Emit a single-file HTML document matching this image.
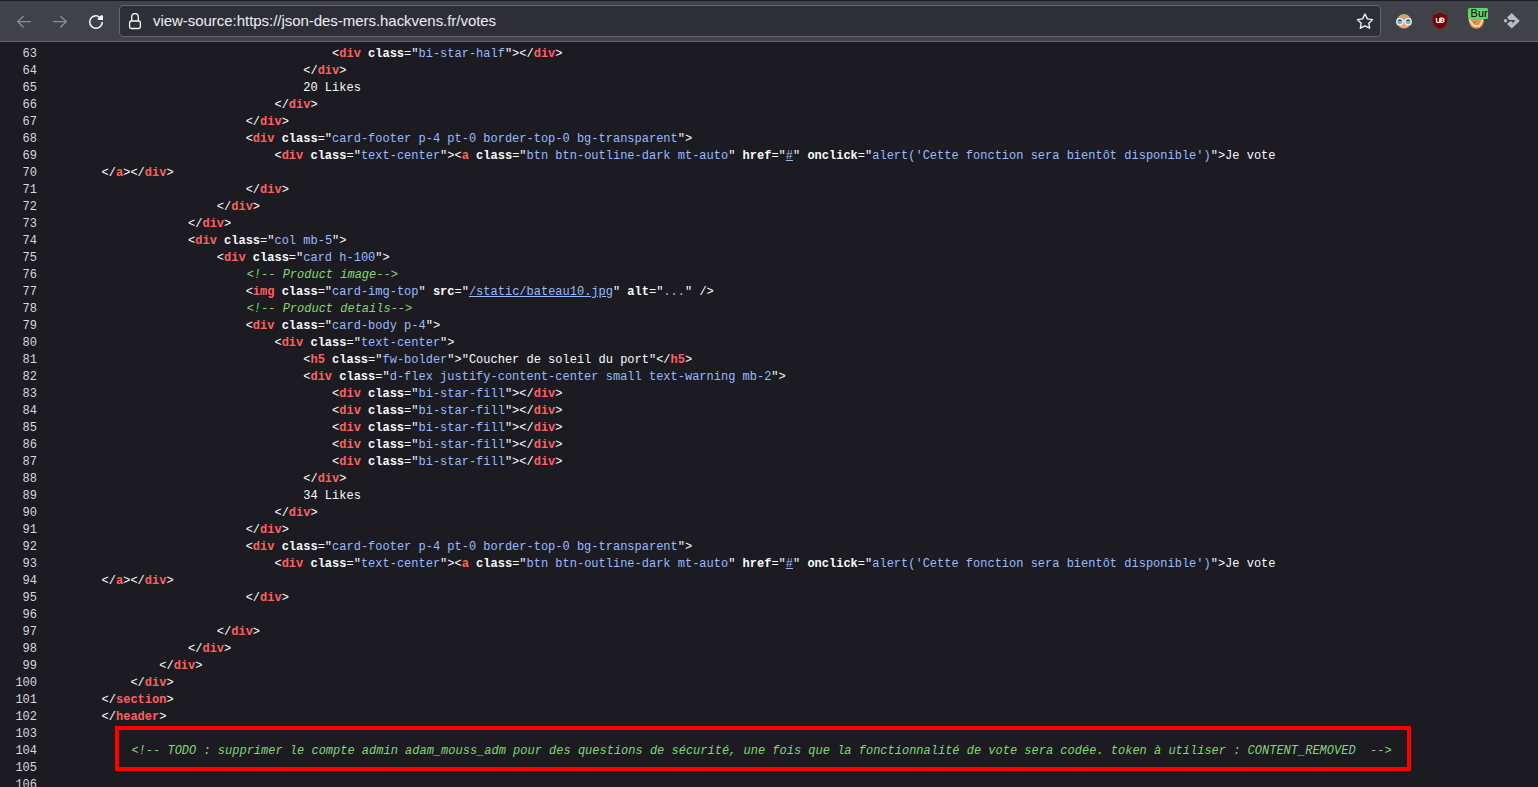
<!DOCTYPE html>
<html><head><meta charset="utf-8">
<style>
html,body{margin:0;padding:0;}
body{width:1538px;height:787px;overflow:hidden;background:#1c1b22;position:relative;font-family:"Liberation Sans",sans-serif;}
#top{position:absolute;left:0;top:0;width:1538px;height:1px;background:#1c1b22;}
#bar{position:absolute;left:0;top:1px;width:1538px;height:40px;background:#41414a;}
#barline{position:absolute;left:0;top:41px;width:1538px;height:1px;background:#66666c;}
#url{position:absolute;left:119px;top:5px;width:1260px;height:30px;border:1px solid #65656c;border-radius:4px;background:#2e2e37;}
#urltext{position:absolute;left:153px;top:11px;font-size:15px;letter-spacing:-0.04px;color:#ededf1;white-space:pre;line-height:20px;}
.ic{position:absolute;}
#code{position:absolute;left:44px;top:46px;margin:0;font-family:"Liberation Mono",monospace;font-size:12px;line-height:17px;color:#fbfbfe;white-space:pre;}
#nums{position:absolute;left:0;width:37px;top:46px;margin:0;font-family:"Liberation Mono",monospace;font-size:12px;line-height:17px;color:#d8d8de;white-space:pre;text-align:right;}
.t{color:#ff6060;font-weight:bold;}
.a{font-weight:bold;color:#fbfbfe;}
.v{color:#97bbff;}
.v u{text-decoration:underline;}
.c{color:#86d672;font-style:italic;position:relative;left:1px;}
#box{position:absolute;left:115px;top:726px;width:1288px;height:37px;border:4px solid #ff0000;}
</style></head><body>
<div id="top"></div>
<div id="bar"></div>
<div id="barline"></div>
<div id="url"></div>
<div id="urltext">view-source:https://json-des-mers.hackvens.fr/votes</div>
<svg class="ic" style="left:0;top:0" width="1538" height="42" viewBox="0 0 1538 42">
 <g fill="none" stroke="#8d8d95" stroke-width="1.4" stroke-linecap="round" stroke-linejoin="round">
  <path d="M23.2 16.5 L17.6 21.6 L23.2 26.9 M17.7 21.6 H30.6"/>
  <path d="M60.8 16.5 L66.4 21.6 L60.8 26.9 M66.3 21.6 H53.4"/>
 </g>
 <svg x="88" y="14" width="16" height="16" viewBox="0 0 16 16"><path fill="#fbfbfe" d="M10.707 6h3.993l.3-.3V1.707L13.293 1 11.9 2.393A6.971 6.971 0 0 0 8 1a7 7 0 1 0 7 7h-1.5A5.5 5.5 0 1 1 8 2.5a5.454 5.454 0 0 1 2.8.8L9.3 4.8 10.707 6z"/></svg>
 <g fill="none" stroke="#fbfbfe" stroke-width="1.3">
  <rect x="129.6" y="21" width="10.8" height="7.5" rx="1.8"/>
  <path d="M131.7 21 V17 A3.3 3.3 0 0 1 138.3 17 V21"/>
 </g>
 <path d="M1365 14 L1367.4 18.9 L1372.6 19.6 L1368.8 23.3 L1369.7 28.2 L1365 25.9 L1360.3 28.2 L1361.2 23.3 L1357.4 19.6 L1362.6 18.9 Z" fill="none" stroke="#fbfbfe" stroke-width="1.3" stroke-linejoin="round"/>
 <!-- face ext -->
 <g>
  <path d="M1396.6 21.5 A7.4 7.6 0 0 1 1411.4 21.5 L1411 26 Q1404 17 1397 26 Z" fill="#c8a476"/>
  <path d="M1398 23 Q1404 15.5 1410 23 Q1410 28.4 1404 28.4 Q1398 28.4 1398 23 Z" fill="#e9a57a"/>
  <circle cx="1399.8" cy="21.8" r="3.1" fill="#6fb8c8" stroke="#f2f2f2" stroke-width="1.2"/>
  <circle cx="1408.2" cy="21.8" r="3.1" fill="#6fb8c8" stroke="#f2f2f2" stroke-width="1.2"/>
  <path d="M1397.8 21 A2.1 2.1 0 0 1 1401.8 21 Z" fill="#1d4a5a"/>
  <path d="M1406.2 21 A2.1 2.1 0 0 1 1410.2 21 Z" fill="#1d4a5a"/>
  <path d="M1402.8 21.2 H1405.2" stroke="#f2f2f2" stroke-width="1.2"/>
 </g>
 <!-- ublock -->
 <path d="M1440 12.8 L1447.2 15.6 L1447.2 21 Q1446.7 26 1440 29 Q1433.3 26 1432.8 21 L1432.8 15.6 Z" fill="#800000"/>
 <path d="M1436.5 18 V21 Q1436.5 22.6 1438.2 22.6 Q1439.8 22.6 1439.8 21 V18" fill="none" stroke="#fff" stroke-width="1.3"/>
 <path d="M1440.8 18.1 H1441.8 A2.2 2.2 0 0 1 1441.8 22.5 H1440.8 Z" fill="none" stroke="#fff" stroke-width="1.2"/>
 <path d="M1441.2 19.2 L1443 20.3 L1441.2 21.4 Z" fill="#fff"/>
 <!-- burp -->
 <circle cx="1476.4" cy="21.3" r="7.4" fill="#ee9230"/>
 <path d="M1469 19.2 L1473.6 25.6 L1479.6 26 L1482.8 19.6" fill="none" stroke="#e4e4e4" stroke-width="1.6" stroke-linejoin="round"/>
 <path d="M1473 22.6 Q1474.6 21.6 1476.4 22.6 Q1474.6 23.4 1473 22.6 Z" fill="#707070"/>
 <rect x="1468" y="7.9" width="20" height="11" rx="1.5" fill="#62d36a"/>
 <text x="1470.6" y="17" font-family="Liberation Sans" font-size="11.8" fill="#000" textLength="17" lengthAdjust="spacingAndGlyphs">Bur</text>
 <!-- diamond -->
 <path d="M1511.7 13.1 L1519.8 20.9 L1511.7 28.4 L1507 24.1 L1510.2 20.9 L1507 17.6 Z" fill="#bababd"/>
 <path d="M1507.5 20.7 H1514.3" stroke="#41414a" stroke-width="1.4"/>
 <path d="M1511.6 20.1 L1515.2 20.1 L1512.8 23.4 Z" fill="#41414a"/>
 <circle cx="1505.5" cy="20.8" r="1.7" fill="#bababd"/>
</svg>

<pre id="nums">63
64
65
66
67
68
69
70
71
72
73
74
75
76
77
78
79
80
81
82
83
84
85
86
87
88
89
90
91
92
93
94
95
96
97
98
99
100
101
102
103
104
105
106</pre>
<pre id="code">                                        &lt;<b class="t">div</b> <b class="a">class</b>="<span class="v">bi-star-half</span>"&gt;&lt;/<b class="t">div</b>&gt;
                                    &lt;/<b class="t">div</b>&gt;
                                    20 Likes
                                &lt;/<b class="t">div</b>&gt;
                            &lt;/<b class="t">div</b>&gt;
                            &lt;<b class="t">div</b> <b class="a">class</b>="<span class="v">card-footer p-4 pt-0 border-top-0 bg-transparent</span>"&gt;
                                &lt;<b class="t">div</b> <b class="a">class</b>="<span class="v">text-center</span>"&gt;&lt;<b class="t">a</b> <b class="a">class</b>="<span class="v">btn btn-outline-dark mt-auto</span>" <b class="a">href</b>="<span class="v"><u>#</u></span>" <b class="a">onclick</b>="<span class="v">alert('Cette fonction sera bientôt disponible')</span>"&gt;Je vote
        &lt;/<b class="t">a</b>&gt;&lt;/<b class="t">div</b>&gt;
                            &lt;/<b class="t">div</b>&gt;
                        &lt;/<b class="t">div</b>&gt;
                    &lt;/<b class="t">div</b>&gt;
                    &lt;<b class="t">div</b> <b class="a">class</b>="<span class="v">col mb-5</span>"&gt;
                        &lt;<b class="t">div</b> <b class="a">class</b>="<span class="v">card h-100</span>"&gt;
                            <i class="c">&lt;!-- Product image--&gt;</i>
                            &lt;<b class="t">img</b> <b class="a">class</b>="<span class="v">card-img-top</span>" <b class="a">src</b>="<span class="v"><u>/static/bateau10.jpg</u></span>" <b class="a">alt</b>="<span class="v">...</span>" /&gt;
                            <i class="c">&lt;!-- Product details--&gt;</i>
                            &lt;<b class="t">div</b> <b class="a">class</b>="<span class="v">card-body p-4</span>"&gt;
                                &lt;<b class="t">div</b> <b class="a">class</b>="<span class="v">text-center</span>"&gt;
                                    &lt;<b class="t">h5</b> <b class="a">class</b>="<span class="v">fw-bolder</span>"&gt;"Coucher de soleil du port"&lt;/<b class="t">h5</b>&gt;
                                    &lt;<b class="t">div</b> <b class="a">class</b>="<span class="v">d-flex justify-content-center small text-warning mb-2</span>"&gt;
                                        &lt;<b class="t">div</b> <b class="a">class</b>="<span class="v">bi-star-fill</span>"&gt;&lt;/<b class="t">div</b>&gt;
                                        &lt;<b class="t">div</b> <b class="a">class</b>="<span class="v">bi-star-fill</span>"&gt;&lt;/<b class="t">div</b>&gt;
                                        &lt;<b class="t">div</b> <b class="a">class</b>="<span class="v">bi-star-fill</span>"&gt;&lt;/<b class="t">div</b>&gt;
                                        &lt;<b class="t">div</b> <b class="a">class</b>="<span class="v">bi-star-fill</span>"&gt;&lt;/<b class="t">div</b>&gt;
                                        &lt;<b class="t">div</b> <b class="a">class</b>="<span class="v">bi-star-fill</span>"&gt;&lt;/<b class="t">div</b>&gt;
                                    &lt;/<b class="t">div</b>&gt;
                                    34 Likes
                                &lt;/<b class="t">div</b>&gt;
                            &lt;/<b class="t">div</b>&gt;
                            &lt;<b class="t">div</b> <b class="a">class</b>="<span class="v">card-footer p-4 pt-0 border-top-0 bg-transparent</span>"&gt;
                                &lt;<b class="t">div</b> <b class="a">class</b>="<span class="v">text-center</span>"&gt;&lt;<b class="t">a</b> <b class="a">class</b>="<span class="v">btn btn-outline-dark mt-auto</span>" <b class="a">href</b>="<span class="v"><u>#</u></span>" <b class="a">onclick</b>="<span class="v">alert('Cette fonction sera bientôt disponible')</span>"&gt;Je vote
        &lt;/<b class="t">a</b>&gt;&lt;/<b class="t">div</b>&gt;
                            &lt;/<b class="t">div</b>&gt;

                        &lt;/<b class="t">div</b>&gt;
                    &lt;/<b class="t">div</b>&gt;
                &lt;/<b class="t">div</b>&gt;
            &lt;/<b class="t">div</b>&gt;
        &lt;/<b class="t">section</b>&gt;
        &lt;/<b class="t">header</b>&gt;

            <i class="c">&lt;!-- TODO : supprimer le compte admin adam_mouss_adm pour des questions de sécurité, une fois que la fonctionnalité de vote sera codée. token à utiliser : CONTENT_REMOVED  --&gt;</i>

</pre>
<div id="box"></div>
</body></html>
